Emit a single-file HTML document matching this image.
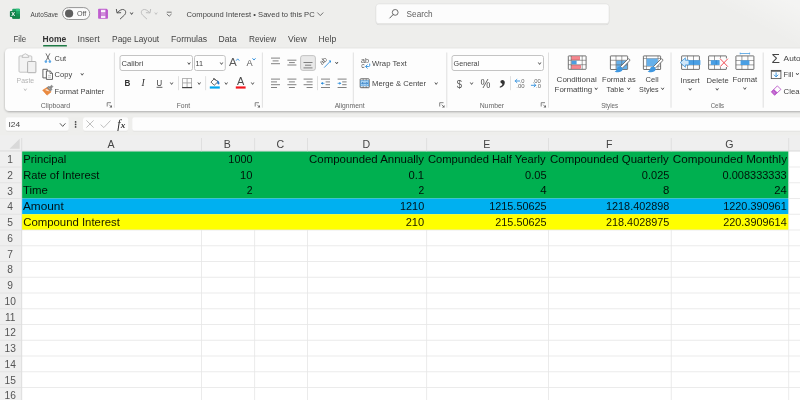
<!DOCTYPE html>
<html lang="en">
<head>
<meta charset="utf-8">
<title>Compound Interest - Excel</title>
<style>
html,body{margin:0;padding:0;background:#eeeeec;overflow:hidden;}
body{position:relative;width:800px;height:400px;overflow:hidden;font-family:"Liberation Sans", sans-serif;}
svg{display:block;position:absolute;left:-10px;top:-10px;font-family:"Liberation Sans", sans-serif;filter:blur(0.4px);}
svg text{white-space:pre;}
</style>
</head>
<body>
<svg width="820" height="420" viewBox="-10 -10 820 420">
<defs><filter id="sh1" x="-5%" y="-20%" width="110%" height="150%"><feDropShadow dx="0" dy="0.9" stdDeviation="1.1" flood-color="#000" flood-opacity="0.30"/></filter><filter id="sh2" x="-5%" y="-30%" width="110%" height="180%"><feDropShadow dx="0" dy="0.5" stdDeviation="0.6" flood-color="#000" flood-opacity="0.22"/></filter><filter id="sh3" x="-5%" y="-30%" width="110%" height="180%"><feDropShadow dx="0" dy="0.4" stdDeviation="0.5" flood-color="#000" flood-opacity="0.12"/></filter><linearGradient id="mica" x1="0" y1="1" x2="1" y2="0"><stop offset="0.45" stop-color="#ffffff" stop-opacity="0"/><stop offset="0.8" stop-color="#ffffff" stop-opacity="0.35"/><stop offset="1" stop-color="#ffffff" stop-opacity="0.4"/></linearGradient></defs>
<g id="chrome-bg">
<rect x="-10.00" y="-10.00" width="820.00" height="420.00" fill="#eeeeec" />
<rect x="700.00" y="-10.00" width="110.00" height="58.00" fill="url(#mica)" />
</g>
<g id="titlebar">
<rect x="12.20" y="8.80" width="7.80" height="10.00" fill="#21a366" rx="1" />
<path d="M16.1 8.8 H19 a1 1 0 0 1 1 1 V11.3 H16.1 Z" fill="#33c481" />
<rect x="16.10" y="11.30" width="3.90" height="2.50" fill="#21a366" />
<rect x="16.10" y="13.80" width="3.90" height="2.50" fill="#129152" />
<path d="M12.2 16.3 H20 V17.8 a1 1 0 0 1 -1 1 H13.2 a1 1 0 0 1 -1 -1 Z" fill="#17834a" />
<rect x="12.20" y="11.30" width="3.90" height="5.00" fill="#17884c" />
<rect x="9.90" y="11.00" width="6.10" height="6.10" fill="#12804a" rx="0.8" />
<text x="11.19" y="16.30" font-size="6.2" fill="#fff" textLength="3.83" lengthAdjust="spacingAndGlyphs" font-weight="700" >X</text>
<text x="30.62" y="16.50" font-size="7.5" fill="#444" textLength="27.52" lengthAdjust="spacingAndGlyphs" >AutoSave</text>
<rect x="62.60" y="7.60" width="27.10" height="11.90" fill="#fbfbfb" stroke="#8a8a8a" stroke-width="0.9" rx="5.95" />
<circle cx="69.1" cy="13.5" r="4.1" fill="#5e5e5e"/>
<text x="76.91" y="16.30" font-size="7.7" fill="#555" textLength="9.44" lengthAdjust="spacingAndGlyphs" >Off</text>
<path d="M98.1 9.5 a0.8 0.8 0 0 1 0.8 -0.8 H106.6 L108 10.1 V18.0 a0.8 0.8 0 0 1 -0.8 0.8 H98.9 a0.8 0.8 0 0 1 -0.8 -0.8 Z" fill="#bf5ecf" />
<rect x="100.40" y="9.40" width="5.60" height="8.80" fill="#cf8bd9" />
<rect x="100.90" y="10.10" width="4.60" height="2.00" fill="#fbf3fc" />
<rect x="100.90" y="16.10" width="4.60" height="1.80" fill="#fbf3fc" />
<line x1="100.50" y1="9.40" x2="100.50" y2="18.20" stroke="#b24cc4" stroke-width="0.6" />
<line x1="105.90" y1="9.40" x2="105.90" y2="18.20" stroke="#b24cc4" stroke-width="0.6" />
<path d="M116.4 9.4 L117.0 12.9 L120.7 12.7" fill="none" stroke="#555" stroke-width="1" stroke-linecap="round" stroke-linejoin="round"/>
<path d="M117.2 12.7 C119.4 10.3 122 8.9 123.9 9.7 C126.1 10.6 126.2 13.2 124.5 15.0 L120.3 18.9" fill="none" stroke="#555" stroke-width="1" stroke-linecap="round"/>
<path d="M130.55 12.80 L131.60 14.40 L132.65 12.80" fill="none" stroke="#444" stroke-width="1.0" stroke-linecap="round" stroke-linejoin="round"/>
<path d="M150.6 9.4 L150.0 12.9 L146.3 12.7" fill="none" stroke="#bdbdbd" stroke-width="1" stroke-linecap="round" stroke-linejoin="round"/>
<path d="M149.8 12.7 C147.6 10.3 145 8.9 143.1 9.7 C140.9 10.6 140.8 13.2 142.5 15.0 L146.7 18.9" fill="none" stroke="#bdbdbd" stroke-width="1" stroke-linecap="round"/>
<path d="M154.95 12.80 L156.00 14.40 L157.05 12.80" fill="none" stroke="#c4c4c4" stroke-width="1.0" stroke-linecap="round" stroke-linejoin="round"/>
<line x1="166.80" y1="12.20" x2="171.60" y2="12.20" stroke="#555" stroke-width="0.8" />
<path d="M167.10 14.20 L169.20 16.20 L171.30 14.20" fill="none" stroke="#555" stroke-width="0.8" stroke-linecap="round" stroke-linejoin="round"/>
<text x="186.60" y="17.00" font-size="8.0" fill="#444" textLength="128.06" lengthAdjust="spacingAndGlyphs" >Compound Interest • Saved to this PC</text>
<path d="M317.60 12.80 L320.30 15.60 L323.00 12.80" fill="none" stroke="#555" stroke-width="0.8" stroke-linecap="round" stroke-linejoin="round"/>
<rect x="376.00" y="4.00" width="233.00" height="19.60" fill="#fcfcfc" stroke="#e2e2e0" stroke-width="0.6" rx="2.8" filter="url(#sh2)"/>
<circle cx="395.2" cy="12.4" r="2.9" fill="none" stroke="#555" stroke-width="0.85"/>
<line x1="393.10" y1="14.60" x2="389.80" y2="18.00" stroke="#555" stroke-width="0.95" stroke-linecap="round"/>
<text x="406.59" y="16.50" font-size="8.2" fill="#606060" textLength="26.07" lengthAdjust="spacingAndGlyphs" >Search</text>
</g>
<g id="tabs">
<text x="13.57" y="41.90" font-size="8.5" fill="#444" textLength="12.60" lengthAdjust="spacingAndGlyphs" >File</text>
<text x="42.58" y="41.90" font-size="8.5" fill="#333" textLength="23.59" lengthAdjust="spacingAndGlyphs" font-weight="700" >Home</text>
<rect x="43.00" y="45.00" width="24.00" height="1.60" fill="#1e7a45" rx="0.7" />
<text x="77.58" y="41.90" font-size="8.5" fill="#444" textLength="22.09" lengthAdjust="spacingAndGlyphs" >Insert</text>
<text x="112.08" y="41.90" font-size="8.5" fill="#444" textLength="47.09" lengthAdjust="spacingAndGlyphs" >Page Layout</text>
<text x="171.07" y="41.90" font-size="8.5" fill="#444" textLength="36.09" lengthAdjust="spacingAndGlyphs" >Formulas</text>
<text x="218.57" y="41.90" font-size="8.5" fill="#444" textLength="18.09" lengthAdjust="spacingAndGlyphs" >Data</text>
<text x="249.07" y="41.90" font-size="8.5" fill="#444" textLength="27.09" lengthAdjust="spacingAndGlyphs" >Review</text>
<text x="288.07" y="41.90" font-size="8.5" fill="#444" textLength="18.59" lengthAdjust="spacingAndGlyphs" >View</text>
<text x="318.57" y="41.90" font-size="8.5" fill="#444" textLength="17.59" lengthAdjust="spacingAndGlyphs" >Help</text>
</g>
<g id="ribbon">
<rect x="5.00" y="48.50" width="825.00" height="62.60" fill="#fdfdfd" rx="4.4" filter="url(#sh1)"/>
<line x1="114.40" y1="52.50" x2="114.40" y2="107.70" stroke="#dcdcdc" stroke-width="0.9" />
<line x1="262.40" y1="52.50" x2="262.40" y2="107.70" stroke="#dcdcdc" stroke-width="0.9" />
<line x1="353.30" y1="52.50" x2="353.30" y2="107.70" stroke="#dcdcdc" stroke-width="0.9" />
<line x1="446.80" y1="52.50" x2="446.80" y2="107.70" stroke="#dcdcdc" stroke-width="0.9" />
<line x1="548.50" y1="52.50" x2="548.50" y2="107.70" stroke="#dcdcdc" stroke-width="0.9" />
<line x1="671.00" y1="52.50" x2="671.00" y2="107.70" stroke="#dcdcdc" stroke-width="0.9" />
<line x1="763.20" y1="52.50" x2="763.20" y2="107.70" stroke="#dcdcdc" stroke-width="0.9" />
<text x="40.64" y="107.60" font-size="7.2" fill="#666" textLength="29.50" lengthAdjust="spacingAndGlyphs" >Clipboard</text>
<text x="176.64" y="107.60" font-size="7.2" fill="#666" textLength="13.50" lengthAdjust="spacingAndGlyphs" >Font</text>
<text x="334.64" y="107.60" font-size="7.2" fill="#666" textLength="30.00" lengthAdjust="spacingAndGlyphs" >Alignment</text>
<text x="479.64" y="107.60" font-size="7.2" fill="#666" textLength="24.50" lengthAdjust="spacingAndGlyphs" >Number</text>
<text x="601.14" y="107.60" font-size="7.2" fill="#666" textLength="17.00" lengthAdjust="spacingAndGlyphs" >Styles</text>
<text x="710.64" y="107.60" font-size="7.2" fill="#666" textLength="13.50" lengthAdjust="spacingAndGlyphs" >Cells</text>
<path d="M111.0 102.7 H107.2 V106.5" fill="none" stroke="#666" stroke-width="0.8" />
<path d="M109.2 104.7 L111.60000000000001 107.10000000000001" fill="none" stroke="#666" stroke-width="0.8" />
<path d="M112.0 104.9 V107.5 H109.4 Z" fill="#666" />
<path d="M259.0 102.7 H255.2 V106.5" fill="none" stroke="#666" stroke-width="0.8" />
<path d="M257.2 104.7 L259.59999999999997 107.10000000000001" fill="none" stroke="#666" stroke-width="0.8" />
<path d="M260.0 104.9 V107.5 H257.4 Z" fill="#666" />
<path d="M443.5 102.7 H439.7 V106.5" fill="none" stroke="#666" stroke-width="0.8" />
<path d="M441.7 104.7 L444.09999999999997 107.10000000000001" fill="none" stroke="#666" stroke-width="0.8" />
<path d="M444.5 104.9 V107.5 H441.9 Z" fill="#666" />
<path d="M545.0 102.7 H541.2 V106.5" fill="none" stroke="#666" stroke-width="0.8" />
<path d="M543.2 104.7 L545.6 107.10000000000001" fill="none" stroke="#666" stroke-width="0.8" />
<path d="M546.0 104.9 V107.5 H543.4000000000001 Z" fill="#666" />
<rect x="19.00" y="55.90" width="12.80" height="16.30" fill="#f3f3f3" stroke="#bebebe" stroke-width="0.9" rx="1" />
<path d="M22.0 57.4 L22.8 54.9 H23.9 a1.5 1.5 0 0 1 2.9 0 H27.9 L28.7 57.4 Z" fill="#f7f7f7" stroke="#bebebe" stroke-width="0.9" stroke-linejoin="round"/>
<rect x="27.60" y="61.50" width="8.30" height="11.20" fill="#f1f1f1" stroke="#a9a9a9" stroke-width="0.9" rx="0.6" />
<text x="16.61" y="82.75" font-size="7.8" fill="#b4b4b4" textLength="17.55" lengthAdjust="spacingAndGlyphs" >Paste</text>
<path d="M24.25 89.00 L25.30 90.60 L26.35 89.00" fill="none" stroke="#c0c0c0" stroke-width="1.0" stroke-linecap="round" stroke-linejoin="round"/>
<line x1="45.90" y1="53.40" x2="49.60" y2="60.60" stroke="#555" stroke-width="0.8" />
<line x1="49.90" y1="53.40" x2="46.20" y2="60.60" stroke="#555" stroke-width="0.8" />
<circle cx="45.9" cy="61.6" r="1.3" fill="#5ba8e8"/>
<circle cx="49.9" cy="61.6" r="1.3" fill="#5ba8e8"/>
<text x="54.61" y="60.60" font-size="7.8" fill="#444" textLength="11.55" lengthAdjust="spacingAndGlyphs" >Cut</text>
<path d="M46.2 77.9 H42.9 V69.3 H47.3 V70.9" fill="none" stroke="#555" stroke-width="0.9" />
<path d="M46.4 71.0 H50.2 L52.5 73.3 V79.4 H46.4 Z" fill="#fdfdfd" stroke="#555" stroke-width="0.9" />
<path d="M50.0 71.1 V73.5 H52.4" fill="none" stroke="#555" stroke-width="0.7" />
<path d="M48 75.4 H51 M48 77.2 H51" fill="none" stroke="#999" stroke-width="0.6" />
<text x="54.61" y="77.25" font-size="7.8" fill="#444" textLength="17.55" lengthAdjust="spacingAndGlyphs" >Copy</text>
<path d="M81.15 73.60 L82.20 75.20 L83.25 73.60" fill="none" stroke="#555" stroke-width="1.0" stroke-linecap="round" stroke-linejoin="round"/>
<path d="M42.6 90.2 L46.9 87.6 L51.1 91.9 L47.0 95.2 Z" fill="#ea8a40" stroke="#e67e30" stroke-width="0.5" stroke-linejoin="round"/>
<path d="M45.0 90.1 L47.0 88.9 L49.6 91.5 Z" fill="#fdf3ea" />
<path d="M47.0 87.6 L49.0 86.2 L49.8 86.9 L51.6 85.2 L52.9 86.5 L51.3 88.3 L52.0 89.2 L50.6 91.0 Z" fill="#8a8a8a" stroke="#666" stroke-width="0.5" stroke-linejoin="round"/>
<path d="M48.8 87.6 L50.4 89.2" fill="none" stroke="#e8e8e8" stroke-width="0.5" />
<text x="54.61" y="93.50" font-size="7.8" fill="#444" textLength="49.55" lengthAdjust="spacingAndGlyphs" >Format Painter</text>
<rect x="120.00" y="55.50" width="72.50" height="15.00" fill="#fefefe" stroke="#bdbdbd" stroke-width="0.9" rx="2" />
<text x="121.61" y="66.00" font-size="7.8" fill="#444" textLength="21.55" lengthAdjust="spacingAndGlyphs" >Calibri</text>
<path d="M187.95 62.80 L189.00 64.40 L190.05 62.80" fill="none" stroke="#555" stroke-width="1.0" stroke-linecap="round" stroke-linejoin="round"/>
<rect x="194.50" y="55.50" width="30.80" height="15.00" fill="#fefefe" stroke="#bdbdbd" stroke-width="0.9" rx="2" />
<text x="195.61" y="66.00" font-size="7.8" fill="#444" textLength="7.55" lengthAdjust="spacingAndGlyphs" >11</text>
<path d="M220.45 62.80 L221.50 64.40 L222.55 62.80" fill="none" stroke="#555" stroke-width="1.0" stroke-linecap="round" stroke-linejoin="round"/>
<text x="229.05" y="66.20" font-size="11.0" fill="#5a5a5a" textLength="7.77" lengthAdjust="spacingAndGlyphs" >A</text>
<path d="M236.40 60.35 L237.70 58.85 L239.00 60.35" fill="none" stroke="#2f8fdc" stroke-width="0.95" stroke-linecap="round" stroke-linejoin="round"/>
<text x="246.44" y="66.20" font-size="9.3" fill="#5a5a5a" textLength="6.15" lengthAdjust="spacingAndGlyphs" >A</text>
<path d="M252.70 58.55 L254.00 60.05 L255.30 58.55" fill="none" stroke="#2f8fdc" stroke-width="0.95" stroke-linecap="round" stroke-linejoin="round"/>
<text x="124.53" y="85.90" font-size="9.4" fill="#333" textLength="5.86" lengthAdjust="spacingAndGlyphs" font-weight="700" >B</text>
<text x="141.41" y="85.90" font-size="9.8" fill="#333" font-style="italic" font-family='"Liberation Serif", serif' >I</text>
<text x="156.56" y="85.70" font-size="8.9" fill="#333" textLength="5.62" lengthAdjust="spacingAndGlyphs" >U</text>
<line x1="156.60" y1="87.30" x2="162.40" y2="87.30" stroke="#333" stroke-width="0.8" />
<path d="M170.55 82.80 L171.60 84.40 L172.65 82.80" fill="none" stroke="#555" stroke-width="1.0" stroke-linecap="round" stroke-linejoin="round"/>
<line x1="178.50" y1="76.20" x2="178.50" y2="90.20" stroke="#dcdcdc" stroke-width="0.9" />
<rect x="182.60" y="78.40" width="9.00" height="9.00" fill="none" stroke="#a4a4a4" stroke-width="0.8" />
<line x1="187.10" y1="78.40" x2="187.10" y2="87.40" stroke="#9a9a9a" stroke-width="0.8" />
<line x1="182.60" y1="82.90" x2="191.60" y2="82.90" stroke="#9a9a9a" stroke-width="0.8" />
<line x1="182.10" y1="87.60" x2="192.10" y2="87.60" stroke="#444" stroke-width="1.2" />
<path d="M198.15 82.80 L199.20 84.40 L200.25 82.80" fill="none" stroke="#555" stroke-width="1.0" stroke-linecap="round" stroke-linejoin="round"/>
<line x1="205.60" y1="76.20" x2="205.60" y2="90.20" stroke="#dcdcdc" stroke-width="0.9" />
<path d="M210.9 82.0 L214.5 78.6 L217.8 81.9 L214.2 85.3 Z" fill="#fdfdfd" stroke="#4a4a4a" stroke-width="0.85" stroke-linejoin="round"/>
<line x1="213.20" y1="78.20" x2="215.60" y2="80.40" stroke="#4a4a4a" stroke-width="0.85" />
<path d="M217.6 80.6 C218.8 81.6 219.3 82.8 219.0 84.2 L217.6 83.6 Z" fill="#1f74c8" stroke="#1f74c8" stroke-width="0.6" />
<rect x="209.80" y="86.40" width="10.00" height="2.20" fill="#00a6ee" />
<path d="M225.15 82.80 L226.20 84.40 L227.25 82.80" fill="none" stroke="#555" stroke-width="1.0" stroke-linecap="round" stroke-linejoin="round"/>
<text x="236.90" y="85.10" font-size="10.0" fill="#4a4a4a" textLength="7.30" lengthAdjust="spacingAndGlyphs" >A</text>
<rect x="235.80" y="86.40" width="9.80" height="2.20" fill="#f2161e" />
<path d="M251.55 82.80 L252.60 84.40 L253.65 82.80" fill="none" stroke="#555" stroke-width="1.0" stroke-linecap="round" stroke-linejoin="round"/>
<line x1="271.00" y1="58.10" x2="280.00" y2="58.10" stroke="#6c6c6c" stroke-width="0.85" />
<line x1="272.60" y1="60.90" x2="278.60" y2="60.90" stroke="#6c6c6c" stroke-width="0.85" />
<line x1="271.00" y1="63.70" x2="280.00" y2="63.70" stroke="#6c6c6c" stroke-width="0.85" />
<line x1="287.40" y1="60.20" x2="296.40" y2="60.20" stroke="#6c6c6c" stroke-width="0.85" />
<line x1="289.00" y1="62.60" x2="294.80" y2="62.60" stroke="#6c6c6c" stroke-width="0.85" />
<line x1="287.40" y1="65.00" x2="296.40" y2="65.00" stroke="#6c6c6c" stroke-width="0.85" />
<rect x="300.60" y="55.60" width="14.80" height="14.80" fill="#e9e9e9" stroke="#bdbdbd" stroke-width="0.9" rx="2.2" />
<line x1="303.50" y1="62.50" x2="312.50" y2="62.50" stroke="#6c6c6c" stroke-width="0.85" />
<line x1="305.00" y1="65.20" x2="311.20" y2="65.20" stroke="#6c6c6c" stroke-width="0.85" />
<line x1="303.50" y1="67.90" x2="312.50" y2="67.90" stroke="#6c6c6c" stroke-width="0.85" />
<g transform="translate(322.3,65.0) rotate(-45)">
<text x="-0.34" y="0.00" font-size="6.8" fill="#555" textLength="7.88" lengthAdjust="spacingAndGlyphs" >ab</text>
</g>
<line x1="324.20" y1="67.60" x2="330.40" y2="61.20" stroke="#2f8fdc" stroke-width="0.9" />
<path d="M328.6 60.6 H331 V63 Z" fill="#2f8fdc" />
<path d="M335.65 62.30 L336.70 63.90 L337.75 62.30" fill="none" stroke="#555" stroke-width="1.0" stroke-linecap="round" stroke-linejoin="round"/>
<line x1="271.00" y1="79.10" x2="280.00" y2="79.10" stroke="#6c6c6c" stroke-width="0.85" />
<line x1="271.00" y1="81.90" x2="277.00" y2="81.90" stroke="#6c6c6c" stroke-width="0.85" />
<line x1="271.00" y1="84.70" x2="280.00" y2="84.70" stroke="#6c6c6c" stroke-width="0.85" />
<line x1="271.00" y1="87.50" x2="277.00" y2="87.50" stroke="#6c6c6c" stroke-width="0.85" />
<line x1="287.40" y1="79.10" x2="296.40" y2="79.10" stroke="#6c6c6c" stroke-width="0.85" />
<line x1="288.90" y1="81.90" x2="294.90" y2="81.90" stroke="#6c6c6c" stroke-width="0.85" />
<line x1="287.40" y1="84.70" x2="296.40" y2="84.70" stroke="#6c6c6c" stroke-width="0.85" />
<line x1="288.90" y1="87.50" x2="294.90" y2="87.50" stroke="#6c6c6c" stroke-width="0.85" />
<line x1="303.60" y1="79.10" x2="312.60" y2="79.10" stroke="#6c6c6c" stroke-width="0.85" />
<line x1="306.60" y1="81.90" x2="312.60" y2="81.90" stroke="#6c6c6c" stroke-width="0.85" />
<line x1="303.60" y1="84.70" x2="312.60" y2="84.70" stroke="#6c6c6c" stroke-width="0.85" />
<line x1="306.60" y1="87.50" x2="312.60" y2="87.50" stroke="#6c6c6c" stroke-width="0.85" />
<line x1="317.50" y1="76.20" x2="317.50" y2="90.20" stroke="#dcdcdc" stroke-width="0.9" />
<line x1="321.00" y1="79.10" x2="330.00" y2="79.10" stroke="#6c6c6c" stroke-width="0.85" />
<line x1="325.60" y1="81.90" x2="330.00" y2="81.90" stroke="#6c6c6c" stroke-width="0.85" />
<line x1="325.60" y1="84.70" x2="330.00" y2="84.70" stroke="#6c6c6c" stroke-width="0.85" />
<line x1="321.00" y1="87.50" x2="330.00" y2="87.50" stroke="#6c6c6c" stroke-width="0.85" />
<path d="M321.0 83.3 H324.4" fill="none" stroke="#2f8fdc" stroke-width="0.8" />
<path d="M323.0 81.9 L320.9 83.3 L323.0 84.7 Z" fill="#2f8fdc" />
<line x1="337.60" y1="79.10" x2="346.60" y2="79.10" stroke="#6c6c6c" stroke-width="0.85" />
<line x1="342.20" y1="81.90" x2="346.60" y2="81.90" stroke="#6c6c6c" stroke-width="0.85" />
<line x1="342.20" y1="84.70" x2="346.60" y2="84.70" stroke="#6c6c6c" stroke-width="0.85" />
<line x1="337.60" y1="87.50" x2="346.60" y2="87.50" stroke="#6c6c6c" stroke-width="0.85" />
<path d="M337.6 83.3 H340.6" fill="none" stroke="#2f8fdc" stroke-width="0.8" />
<path d="M339.3 81.9 L341.4 83.3 L339.3 84.7 Z" fill="#2f8fdc" />
<text x="361.05" y="63.00" font-size="7.0" fill="#555" textLength="7.99" lengthAdjust="spacingAndGlyphs" >ab</text>
<text x="361.25" y="68.00" font-size="7.0" fill="#555" textLength="3.39" lengthAdjust="spacingAndGlyphs" >c</text>
<path d="M369.7 63.6 V65.5 a1 1 0 0 1 -1 1 H365.8" fill="none" stroke="#2f8fdc" stroke-width="0.9" />
<path d="M367.3 64.8 L365.5 66.5 L367.3 68.2" fill="none" stroke="#2f8fdc" stroke-width="0.9" stroke-linejoin="round" stroke-linecap="round"/>
<text x="372.11" y="66.00" font-size="7.8" fill="#444" textLength="34.55" lengthAdjust="spacingAndGlyphs" >Wrap Text</text>
<rect x="360.20" y="78.80" width="9.00" height="8.90" fill="#fdfdfd" stroke="#555" stroke-width="0.9" rx="0.6" />
<rect x="360.70" y="80.70" width="8.00" height="5.20" fill="#a9d2f2" stroke="#3d94dc" stroke-width="0.6" />
<line x1="363.20" y1="78.80" x2="363.20" y2="80.50" stroke="#555" stroke-width="0.6" />
<line x1="366.20" y1="78.80" x2="366.20" y2="80.50" stroke="#555" stroke-width="0.6" />
<line x1="363.20" y1="86.10" x2="363.20" y2="87.70" stroke="#555" stroke-width="0.6" />
<line x1="366.20" y1="86.10" x2="366.20" y2="87.70" stroke="#555" stroke-width="0.6" />
<path d="M361.8 83.3 H367.6 M363.0 82.1 L361.8 83.3 L363.0 84.5 M366.4 82.1 L367.6 83.3 L366.4 84.5" fill="none" stroke="#1b6fbd" stroke-width="0.7" />
<text x="372.11" y="86.25" font-size="7.8" fill="#444" textLength="54.05" lengthAdjust="spacingAndGlyphs" >Merge &amp; Center</text>
<path d="M435.15 82.80 L436.20 84.40 L437.25 82.80" fill="none" stroke="#555" stroke-width="1.0" stroke-linecap="round" stroke-linejoin="round"/>
<rect x="452.00" y="55.50" width="91.50" height="15.00" fill="#fefefe" stroke="#bdbdbd" stroke-width="0.9" rx="2" />
<text x="453.61" y="66.00" font-size="7.8" fill="#444" textLength="25.55" lengthAdjust="spacingAndGlyphs" >General</text>
<path d="M538.55 62.80 L539.60 64.40 L540.65 62.80" fill="none" stroke="#555" stroke-width="1.0" stroke-linecap="round" stroke-linejoin="round"/>
<text x="456.81" y="87.70" font-size="11.8" fill="#555" textLength="5.23" lengthAdjust="spacingAndGlyphs" >$</text>
<path d="M470.55 82.80 L471.60 84.40 L472.65 82.80" fill="none" stroke="#555" stroke-width="1.0" stroke-linecap="round" stroke-linejoin="round"/>
<text x="480.58" y="87.90" font-size="12.4" fill="#555" textLength="9.97" lengthAdjust="spacingAndGlyphs" >%</text>
<text x="499.55" y="83.80" font-size="25" fill="#333" font-weight="700" font-family='"Liberation Serif", serif' >,</text>
<line x1="510.50" y1="76.20" x2="510.50" y2="90.20" stroke="#dcdcdc" stroke-width="0.9" />
<path d="M515.2 81.0 H519.6 M516.9 79.4 L515.2 81.0 L516.9 82.6" fill="none" stroke="#2f8fdc" stroke-width="0.9" stroke-linejoin="round" stroke-linecap="round"/>
<text x="521.29" y="83.20" font-size="6.2" fill="#666" textLength="3.23" lengthAdjust="spacingAndGlyphs" >0</text>
<circle cx="520.7" cy="82.8" r="0.4" fill="#666"/>
<text x="516.29" y="88.00" font-size="6.2" fill="#666" textLength="8.33" lengthAdjust="spacingAndGlyphs" >.00</text>
<text x="532.69" y="83.20" font-size="6.2" fill="#666" textLength="8.23" lengthAdjust="spacingAndGlyphs" >.00</text>
<path d="M531.3 85.3 H535.8 M534.1 83.7 L535.8 85.3 L534.1 86.9" fill="none" stroke="#2f8fdc" stroke-width="0.9" stroke-linejoin="round" stroke-linecap="round"/>
<text x="536.09" y="88.00" font-size="6.2" fill="#666" textLength="4.83" lengthAdjust="spacingAndGlyphs" >.0</text>
<rect x="568.30" y="55.90" width="17.80" height="13.40" fill="#fdfdfd" stroke="#5a5a5a" stroke-width="0.85" rx="0.4" />
<rect x="571.50" y="56.50" width="8.30" height="3.40" fill="#f6868d" stroke="#e8545e" stroke-width="0.4" />
<rect x="571.40" y="60.70" width="5.20" height="3.60" fill="#4a9de2" />
<rect x="571.50" y="65.20" width="9.30" height="3.50" fill="#f6868d" stroke="#e8545e" stroke-width="0.4" />
<line x1="568.30" y1="60.30" x2="586.10" y2="60.30" stroke="#5a5a5a" stroke-width="0.7" opacity="0.8"/>
<line x1="568.30" y1="64.70" x2="586.10" y2="64.70" stroke="#5a5a5a" stroke-width="0.7" opacity="0.8"/>
<line x1="571.10" y1="55.90" x2="571.10" y2="69.30" stroke="#5a5a5a" stroke-width="0.7" opacity="0.8"/>
<line x1="582.20" y1="55.90" x2="582.20" y2="69.30" stroke="#5a5a5a" stroke-width="0.7" opacity="0.8"/>
<text x="556.61" y="81.90" font-size="7.8" fill="#444" textLength="40.05" lengthAdjust="spacingAndGlyphs" >Conditional</text>
<text x="554.61" y="91.50" font-size="7.8" fill="#444" textLength="37.55" lengthAdjust="spacingAndGlyphs" >Formatting</text>
<path d="M595.15 88.10 L596.20 89.70 L597.25 88.10" fill="none" stroke="#555" stroke-width="1.0" stroke-linecap="round" stroke-linejoin="round"/>
<rect x="610.40" y="55.90" width="17.20" height="13.60" fill="#fdfdfd" stroke="#5a5a5a" stroke-width="0.85" rx="0.4" />
<rect x="616.20" y="60.50" width="11.00" height="8.60" fill="#66b0ea" />
<line x1="610.40" y1="60.30" x2="627.60" y2="60.30" stroke="#5a5a5a" stroke-width="0.7" opacity="0.8"/>
<line x1="610.40" y1="64.90" x2="627.60" y2="64.90" stroke="#5a5a5a" stroke-width="0.7" opacity="0.8"/>
<line x1="616.00" y1="55.90" x2="616.00" y2="69.50" stroke="#5a5a5a" stroke-width="0.7" opacity="0.8"/>
<line x1="621.80" y1="55.90" x2="621.80" y2="69.50" stroke="#5a5a5a" stroke-width="0.7" opacity="0.8"/>
<path d="M620.2 66.80000000000001 L627.8000000000001 59.2 a1.1 1.1 0 0 1 1.7 1.7 L622.0 68.5 Z" fill="#fdfdfd" stroke="#5a5a5a" stroke-width="0.8" stroke-linejoin="round"/>
<path d="M614.6 71.4 C616.2 71.0 616.8000000000001 69.60000000000001 617.4 68.0 C618.4 66.2 620.4 66.0 621.8000000000001 67.2 C623.2 68.60000000000001 622.8000000000001 70.60000000000001 621.0 71.60000000000001 C619.0 72.60000000000001 616.6 72.4 614.6 71.4 Z" fill="#3f97e0" />
<text x="602.11" y="81.90" font-size="7.8" fill="#444" textLength="33.55" lengthAdjust="spacingAndGlyphs" >Format as</text>
<text x="606.61" y="91.50" font-size="7.8" fill="#444" textLength="17.55" lengthAdjust="spacingAndGlyphs" >Table</text>
<path d="M627.55 88.10 L628.60 89.70 L629.65 88.10" fill="none" stroke="#555" stroke-width="1.0" stroke-linecap="round" stroke-linejoin="round"/>
<rect x="643.40" y="55.90" width="17.20" height="13.60" fill="#fdfdfd" stroke="#5a5a5a" stroke-width="0.85" rx="0.4" />
<line x1="643.40" y1="58.40" x2="660.60" y2="58.40" stroke="#5a5a5a" stroke-width="0.7" opacity="0.8"/>
<line x1="643.40" y1="66.20" x2="660.60" y2="66.20" stroke="#5a5a5a" stroke-width="0.7" opacity="0.8"/>
<line x1="646.40" y1="55.90" x2="646.40" y2="69.50" stroke="#5a5a5a" stroke-width="0.7" opacity="0.8"/>
<line x1="658.00" y1="55.90" x2="658.00" y2="69.50" stroke="#5a5a5a" stroke-width="0.7" opacity="0.8"/>
<rect x="646.60" y="58.60" width="11.20" height="7.40" fill="#66b0ea" />
<path d="M653.2 66.80000000000001 L660.8000000000001 59.2 a1.1 1.1 0 0 1 1.7 1.7 L655.0 68.5 Z" fill="#fdfdfd" stroke="#5a5a5a" stroke-width="0.8" stroke-linejoin="round"/>
<path d="M647.6 71.4 C649.2 71.0 649.8000000000001 69.60000000000001 650.4 68.0 C651.4 66.2 653.4 66.0 654.8000000000001 67.2 C656.2 68.60000000000001 655.8000000000001 70.60000000000001 654.0 71.60000000000001 C652.0 72.60000000000001 649.6 72.4 647.6 71.4 Z" fill="#3f97e0" />
<text x="645.61" y="81.90" font-size="7.8" fill="#444" textLength="13.05" lengthAdjust="spacingAndGlyphs" >Cell</text>
<text x="639.11" y="91.50" font-size="7.8" fill="#444" textLength="19.55" lengthAdjust="spacingAndGlyphs" >Styles</text>
<path d="M661.55 88.10 L662.60 89.70 L663.65 88.10" fill="none" stroke="#555" stroke-width="1.0" stroke-linecap="round" stroke-linejoin="round"/>
<rect x="681.60" y="55.90" width="17.80" height="13.50" fill="#fdfdfd" stroke="#5a5a5a" stroke-width="0.85" rx="0.4" />
<line x1="687.53" y1="55.90" x2="687.53" y2="69.40" stroke="#5a5a5a" stroke-width="0.7" opacity="0.85"/>
<line x1="681.60" y1="60.40" x2="699.40" y2="60.40" stroke="#5a5a5a" stroke-width="0.7" opacity="0.85"/>
<line x1="693.47" y1="55.90" x2="693.47" y2="69.40" stroke="#5a5a5a" stroke-width="0.7" opacity="0.85"/>
<line x1="681.60" y1="64.90" x2="699.40" y2="64.90" stroke="#5a5a5a" stroke-width="0.7" opacity="0.85"/>
<rect x="684.60" y="60.20" width="15.80" height="4.70" fill="#4a9fe4" />
<path d="M685.4 57.8 L680.2 62.55 L685.4 67.3 V64.9 H689 V60.2 H685.4 Z" fill="#cfe6f8" stroke="#2f8fdc" stroke-width="0.7" stroke-linejoin="round"/>
<line x1="693.50" y1="60.20" x2="693.50" y2="64.90" stroke="#2277c4" stroke-width="0.6" />
<text x="680.61" y="82.50" font-size="7.8" fill="#444" textLength="19.05" lengthAdjust="spacingAndGlyphs" >Insert</text>
<path d="M689.15 88.60 L690.20 90.20 L691.25 88.60" fill="none" stroke="#555" stroke-width="1.0" stroke-linecap="round" stroke-linejoin="round"/>
<rect x="708.60" y="55.90" width="17.80" height="13.50" fill="#fdfdfd" stroke="#5a5a5a" stroke-width="0.85" rx="0.4" />
<line x1="714.53" y1="55.90" x2="714.53" y2="69.40" stroke="#5a5a5a" stroke-width="0.7" opacity="0.85"/>
<line x1="708.60" y1="60.40" x2="726.40" y2="60.40" stroke="#5a5a5a" stroke-width="0.7" opacity="0.85"/>
<line x1="720.47" y1="55.90" x2="720.47" y2="69.40" stroke="#5a5a5a" stroke-width="0.7" opacity="0.85"/>
<line x1="708.60" y1="64.90" x2="726.40" y2="64.90" stroke="#5a5a5a" stroke-width="0.7" opacity="0.85"/>
<rect x="710.80" y="60.20" width="9.80" height="4.70" fill="#4a9fe4" />
<line x1="716.20" y1="60.20" x2="716.20" y2="64.90" stroke="#2277c4" stroke-width="0.6" />
<rect x="719.60" y="58.40" width="9.00" height="8.60" fill="#fdfdfd" />
<path d="M720.4 59 L727.6 66.4 M727.6 59 L720.4 66.4" fill="none" stroke="#f0454d" stroke-width="0.95" stroke-linecap="round"/>
<text x="706.61" y="82.50" font-size="7.8" fill="#444" textLength="22.05" lengthAdjust="spacingAndGlyphs" >Delete</text>
<path d="M716.15 88.60 L717.20 90.20 L718.25 88.60" fill="none" stroke="#555" stroke-width="1.0" stroke-linecap="round" stroke-linejoin="round"/>
<rect x="735.90" y="55.90" width="18.00" height="13.50" fill="#fdfdfd" stroke="#5a5a5a" stroke-width="0.85" rx="0.4" />
<line x1="741.90" y1="55.90" x2="741.90" y2="69.40" stroke="#5a5a5a" stroke-width="0.7" opacity="0.85"/>
<line x1="735.90" y1="60.40" x2="753.90" y2="60.40" stroke="#5a5a5a" stroke-width="0.7" opacity="0.85"/>
<line x1="747.90" y1="55.90" x2="747.90" y2="69.40" stroke="#5a5a5a" stroke-width="0.7" opacity="0.85"/>
<line x1="735.90" y1="64.90" x2="753.90" y2="64.90" stroke="#5a5a5a" stroke-width="0.7" opacity="0.85"/>
<rect x="740.60" y="60.30" width="8.80" height="4.70" fill="#4a9fe4" />
<path d="M740.2 53.5 H749.6 M740.2 52.6 V54.4 M749.6 52.6 V54.4" fill="none" stroke="#2f8fdc" stroke-width="0.7" />
<text x="732.61" y="81.50" font-size="7.8" fill="#444" textLength="24.55" lengthAdjust="spacingAndGlyphs" >Format</text>
<path d="M743.75 87.80 L744.80 89.40 L745.85 87.80" fill="none" stroke="#555" stroke-width="1.0" stroke-linecap="round" stroke-linejoin="round"/>
<text x="771.59" y="62.60" font-size="12.2" fill="#444" textLength="8.45" lengthAdjust="spacingAndGlyphs" >Σ</text>
<text x="783.61" y="60.90" font-size="7.8" fill="#444" textLength="34.05" lengthAdjust="spacingAndGlyphs" >AutoSum</text>
<rect x="771.30" y="70.40" width="9.60" height="8.20" fill="#fdfdfd" stroke="#555" stroke-width="0.85" />
<line x1="771.30" y1="71.00" x2="780.90" y2="71.00" stroke="#555" stroke-width="1.4" />
<path d="M776.1 72.8 V76.6 M774.2 75 L776.1 76.9 L778 75" fill="none" stroke="#2f8fdc" stroke-width="0.9" stroke-linecap="round" stroke-linejoin="round"/>
<text x="783.61" y="76.90" font-size="7.8" fill="#444" textLength="9.55" lengthAdjust="spacingAndGlyphs" >Fill</text>
<path d="M796.35 73.40 L797.40 75.00 L798.45 73.40" fill="none" stroke="#555" stroke-width="1.0" stroke-linecap="round" stroke-linejoin="round"/>
<path d="M777.4 85.9 L780.9 89.4 L774.6 95.3 L771.3 91.8 Z" fill="#fdfdfd" stroke="#bb5acb" stroke-width="0.9" stroke-linejoin="round"/>
<path d="M774.0 89.2 L777.5 92.6 L774.6 95.3 L771.3 91.8 Z" fill="#bb5acb" />
<path d="M773.2 91.6 L774.8 93.2" fill="none" stroke="#e9c6ee" stroke-width="0.6" />
<text x="783.61" y="93.60" font-size="7.8" fill="#444" textLength="18.55" lengthAdjust="spacingAndGlyphs" >Clear</text>
</g>
<g id="formulabar">
<rect x="5.60" y="117.20" width="63.20" height="13.60" fill="#fdfdfd" rx="2.2" filter="url(#sh3)"/>
<text x="8.51" y="127.00" font-size="7.8" fill="#444" textLength="11.65" lengthAdjust="spacingAndGlyphs" >I24</text>
<path d="M60.20 123.60 L62.70 126.40 L65.20 123.60" fill="none" stroke="#555" stroke-width="0.95" stroke-linecap="round" stroke-linejoin="round"/>
<circle cx="75.6" cy="121.9" r="0.85" fill="#444"/>
<circle cx="75.6" cy="124.4" r="0.85" fill="#444"/>
<circle cx="75.6" cy="126.9" r="0.85" fill="#444"/>
<rect x="83.00" y="117.20" width="45.20" height="13.60" fill="#fdfdfd" rx="2.2" filter="url(#sh3)"/>
<path d="M86.4 120.4 L93.6 127.6 M93.6 120.4 L86.4 127.6" fill="none" stroke="#b8b8b8" stroke-width="0.9" />
<path d="M100.6 124.6 L103.8 127.6 L110.4 120.6" fill="none" stroke="#b8b8b8" stroke-width="0.9" />
<text x="117.20" y="127.90" font-size="12.0" fill="#2a2a2a" font-style="italic" font-family='"Liberation Serif", serif' >f</text>
<text x="120.74" y="127.90" font-size="9.2" fill="#333" font-weight="700" font-style="italic" font-family='"Liberation Serif", serif' >x</text>
<rect x="132.20" y="117.20" width="697.80" height="13.60" fill="#fdfdfd" rx="2.2" filter="url(#sh3)"/>
</g>
<g id="sheet">
<rect x="21.90" y="151.25" width="788.10" height="258.75" fill="#ffffff" />
<rect x="-10.00" y="135.50" width="820.00" height="15.75" fill="#efefef" />
<rect x="-10.00" y="151.25" width="31.90" height="258.75" fill="#efefef" />
<rect x="21.90" y="151.25" width="766.80" height="47.25" fill="#00b050" />
<rect x="21.90" y="198.50" width="766.80" height="15.75" fill="#00b0f0" />
<rect x="21.90" y="214.25" width="766.80" height="15.75" fill="#ffff00" />
<line x1="21.90" y1="230.00" x2="810.00" y2="230.00" stroke="#e6e6e6" stroke-width="0.8" />
<line x1="21.90" y1="245.75" x2="810.00" y2="245.75" stroke="#e6e6e6" stroke-width="0.8" />
<line x1="21.90" y1="261.50" x2="810.00" y2="261.50" stroke="#e6e6e6" stroke-width="0.8" />
<line x1="21.90" y1="277.25" x2="810.00" y2="277.25" stroke="#e6e6e6" stroke-width="0.8" />
<line x1="21.90" y1="293.00" x2="810.00" y2="293.00" stroke="#e6e6e6" stroke-width="0.8" />
<line x1="21.90" y1="308.75" x2="810.00" y2="308.75" stroke="#e6e6e6" stroke-width="0.8" />
<line x1="21.90" y1="324.50" x2="810.00" y2="324.50" stroke="#e6e6e6" stroke-width="0.8" />
<line x1="21.90" y1="340.25" x2="810.00" y2="340.25" stroke="#e6e6e6" stroke-width="0.8" />
<line x1="21.90" y1="356.00" x2="810.00" y2="356.00" stroke="#e6e6e6" stroke-width="0.8" />
<line x1="21.90" y1="371.75" x2="810.00" y2="371.75" stroke="#e6e6e6" stroke-width="0.8" />
<line x1="21.90" y1="387.50" x2="810.00" y2="387.50" stroke="#e6e6e6" stroke-width="0.8" />
<line x1="21.90" y1="403.25" x2="810.00" y2="403.25" stroke="#e6e6e6" stroke-width="0.8" />
<line x1="21.90" y1="419.00" x2="810.00" y2="419.00" stroke="#e6e6e6" stroke-width="0.8" />
<line x1="788.70" y1="167.00" x2="810.00" y2="167.00" stroke="#e6e6e6" stroke-width="0.8" />
<line x1="788.70" y1="182.75" x2="810.00" y2="182.75" stroke="#e6e6e6" stroke-width="0.8" />
<line x1="788.70" y1="198.50" x2="810.00" y2="198.50" stroke="#e6e6e6" stroke-width="0.8" />
<line x1="788.70" y1="214.25" x2="810.00" y2="214.25" stroke="#e6e6e6" stroke-width="0.8" />
<line x1="201.50" y1="230.00" x2="201.50" y2="410.00" stroke="#e6e6e6" stroke-width="0.8" />
<line x1="201.50" y1="138.00" x2="201.50" y2="151.25" stroke="#dadada" stroke-width="0.8" />
<line x1="254.60" y1="230.00" x2="254.60" y2="410.00" stroke="#e6e6e6" stroke-width="0.8" />
<line x1="254.60" y1="138.00" x2="254.60" y2="151.25" stroke="#dadada" stroke-width="0.8" />
<line x1="307.50" y1="230.00" x2="307.50" y2="410.00" stroke="#e6e6e6" stroke-width="0.8" />
<line x1="307.50" y1="138.00" x2="307.50" y2="151.25" stroke="#dadada" stroke-width="0.8" />
<line x1="426.60" y1="230.00" x2="426.60" y2="410.00" stroke="#e6e6e6" stroke-width="0.8" />
<line x1="426.60" y1="138.00" x2="426.60" y2="151.25" stroke="#dadada" stroke-width="0.8" />
<line x1="548.50" y1="230.00" x2="548.50" y2="410.00" stroke="#e6e6e6" stroke-width="0.8" />
<line x1="548.50" y1="138.00" x2="548.50" y2="151.25" stroke="#dadada" stroke-width="0.8" />
<line x1="671.25" y1="230.00" x2="671.25" y2="410.00" stroke="#e6e6e6" stroke-width="0.8" />
<line x1="671.25" y1="138.00" x2="671.25" y2="151.25" stroke="#dadada" stroke-width="0.8" />
<line x1="788.70" y1="151.25" x2="788.70" y2="410.00" stroke="#e6e6e6" stroke-width="0.8" />
<line x1="788.70" y1="138.00" x2="788.70" y2="151.25" stroke="#dadada" stroke-width="0.8" />
<line x1="21.70" y1="138.00" x2="21.70" y2="410.00" stroke="#dbdbdb" stroke-width="0.9" />
<line x1="-10.00" y1="150.95" x2="810.00" y2="150.95" stroke="#d8d8d8" stroke-width="0.8" />
<line x1="-10.00" y1="167.00" x2="21.40" y2="167.00" stroke="#e0e0e0" stroke-width="0.8" />
<line x1="-10.00" y1="182.75" x2="21.40" y2="182.75" stroke="#e0e0e0" stroke-width="0.8" />
<line x1="-10.00" y1="198.50" x2="21.40" y2="198.50" stroke="#e0e0e0" stroke-width="0.8" />
<line x1="-10.00" y1="214.25" x2="21.40" y2="214.25" stroke="#e0e0e0" stroke-width="0.8" />
<line x1="-10.00" y1="230.00" x2="21.40" y2="230.00" stroke="#e0e0e0" stroke-width="0.8" />
<line x1="-10.00" y1="245.75" x2="21.40" y2="245.75" stroke="#e0e0e0" stroke-width="0.8" />
<line x1="-10.00" y1="261.50" x2="21.40" y2="261.50" stroke="#e0e0e0" stroke-width="0.8" />
<line x1="-10.00" y1="277.25" x2="21.40" y2="277.25" stroke="#e0e0e0" stroke-width="0.8" />
<line x1="-10.00" y1="293.00" x2="21.40" y2="293.00" stroke="#e0e0e0" stroke-width="0.8" />
<line x1="-10.00" y1="308.75" x2="21.40" y2="308.75" stroke="#e0e0e0" stroke-width="0.8" />
<line x1="-10.00" y1="324.50" x2="21.40" y2="324.50" stroke="#e0e0e0" stroke-width="0.8" />
<line x1="-10.00" y1="340.25" x2="21.40" y2="340.25" stroke="#e0e0e0" stroke-width="0.8" />
<line x1="-10.00" y1="356.00" x2="21.40" y2="356.00" stroke="#e0e0e0" stroke-width="0.8" />
<line x1="-10.00" y1="371.75" x2="21.40" y2="371.75" stroke="#e0e0e0" stroke-width="0.8" />
<line x1="-10.00" y1="387.50" x2="21.40" y2="387.50" stroke="#e0e0e0" stroke-width="0.8" />
<line x1="-10.00" y1="403.25" x2="21.40" y2="403.25" stroke="#e0e0e0" stroke-width="0.8" />
<line x1="-10.00" y1="419.00" x2="21.40" y2="419.00" stroke="#e0e0e0" stroke-width="0.8" />
<path d="M19.7 138.8 V148.7 H9.5 Z" fill="#d9d9d9" />
<text x="111.00" y="147.5" font-size="10.6" fill="#444" text-anchor="middle">A</text>
<text x="227.35" y="147.5" font-size="10.6" fill="#444" text-anchor="middle">B</text>
<text x="280.35" y="147.5" font-size="10.6" fill="#444" text-anchor="middle">C</text>
<text x="366.35" y="147.5" font-size="10.6" fill="#444" text-anchor="middle">D</text>
<text x="486.85" y="147.5" font-size="10.6" fill="#444" text-anchor="middle">E</text>
<text x="609.17" y="147.5" font-size="10.6" fill="#444" text-anchor="middle">F</text>
<text x="729.27" y="147.5" font-size="10.6" fill="#444" text-anchor="middle">G</text>
<text x="10.2" y="163.00" font-size="10.2" fill="#555" text-anchor="middle">1</text>
<text x="10.2" y="178.75" font-size="10.2" fill="#555" text-anchor="middle">2</text>
<text x="10.2" y="194.50" font-size="10.2" fill="#555" text-anchor="middle">3</text>
<text x="10.2" y="210.25" font-size="10.2" fill="#555" text-anchor="middle">4</text>
<text x="10.2" y="226.00" font-size="10.2" fill="#555" text-anchor="middle">5</text>
<text x="10.2" y="241.75" font-size="10.2" fill="#555" text-anchor="middle">6</text>
<text x="10.2" y="257.50" font-size="10.2" fill="#555" text-anchor="middle">7</text>
<text x="10.2" y="273.25" font-size="10.2" fill="#555" text-anchor="middle">8</text>
<text x="10.2" y="289.00" font-size="10.2" fill="#555" text-anchor="middle">9</text>
<text x="10.2" y="304.75" font-size="10.2" fill="#555" text-anchor="middle">10</text>
<text x="10.2" y="320.50" font-size="10.2" fill="#555" text-anchor="middle">11</text>
<text x="10.2" y="336.25" font-size="10.2" fill="#555" text-anchor="middle">12</text>
<text x="10.2" y="352.00" font-size="10.2" fill="#555" text-anchor="middle">13</text>
<text x="10.2" y="367.75" font-size="10.2" fill="#555" text-anchor="middle">14</text>
<text x="10.2" y="383.50" font-size="10.2" fill="#555" text-anchor="middle">15</text>
<text x="10.2" y="399.25" font-size="10.2" fill="#555" text-anchor="middle">16</text>
<g fill-opacity="0.9">
<text x="23.23" y="162.75" font-size="10.3" fill="#000" textLength="43.17" lengthAdjust="spacingAndGlyphs" >Principal</text>
<text x="23.23" y="178.50" font-size="10.3" fill="#000" textLength="76.17" lengthAdjust="spacingAndGlyphs" >Rate of Interest</text>
<text x="22.98" y="194.25" font-size="10.3" fill="#000" textLength="24.92" lengthAdjust="spacingAndGlyphs" >Time</text>
<text x="22.98" y="210.00" font-size="10.3" fill="#000" textLength="40.72" lengthAdjust="spacingAndGlyphs" >Amount</text>
<text x="23.18" y="225.75" font-size="10.3" fill="#000" textLength="96.72" lengthAdjust="spacingAndGlyphs" >Compound Interest</text>
<text x="228.39" y="162.75" font-size="10.3" fill="#000" textLength="24.12" lengthAdjust="spacingAndGlyphs" >1000</text>
<text x="240.09" y="178.50" font-size="10.3" fill="#000" textLength="12.42" lengthAdjust="spacingAndGlyphs" >10</text>
<text x="246.69" y="194.25" font-size="10.3" fill="#000" textLength="5.82" lengthAdjust="spacingAndGlyphs" >2</text>
<text x="309.09" y="162.75" font-size="10.3" fill="#000" textLength="115.02" lengthAdjust="spacingAndGlyphs" >Compounded Annually</text>
<text x="408.49" y="178.50" font-size="10.3" fill="#000" textLength="15.62" lengthAdjust="spacingAndGlyphs" >0.1</text>
<text x="418.49" y="194.25" font-size="10.3" fill="#000" textLength="5.72" lengthAdjust="spacingAndGlyphs" >2</text>
<text x="399.99" y="210.00" font-size="10.3" fill="#000" textLength="24.22" lengthAdjust="spacingAndGlyphs" >1210</text>
<text x="405.69" y="225.75" font-size="10.3" fill="#000" textLength="18.52" lengthAdjust="spacingAndGlyphs" >210</text>
<text x="427.99" y="162.75" font-size="10.3" fill="#000" textLength="117.52" lengthAdjust="spacingAndGlyphs" >Compunded Half Yearly</text>
<text x="525.09" y="178.50" font-size="10.3" fill="#000" textLength="21.52" lengthAdjust="spacingAndGlyphs" >0.05</text>
<text x="540.19" y="194.25" font-size="10.3" fill="#000" textLength="6.42" lengthAdjust="spacingAndGlyphs" >4</text>
<text x="489.19" y="210.00" font-size="10.3" fill="#000" textLength="57.42" lengthAdjust="spacingAndGlyphs" >1215.50625</text>
<text x="495.29" y="225.75" font-size="10.3" fill="#000" textLength="51.32" lengthAdjust="spacingAndGlyphs" >215.50625</text>
<text x="550.09" y="162.75" font-size="10.3" fill="#000" textLength="118.62" lengthAdjust="spacingAndGlyphs" >Compounded Quarterly</text>
<text x="641.88" y="178.50" font-size="10.3" fill="#000" textLength="27.52" lengthAdjust="spacingAndGlyphs" >0.025</text>
<text x="663.09" y="194.25" font-size="10.3" fill="#000" textLength="6.32" lengthAdjust="spacingAndGlyphs" >8</text>
<text x="605.99" y="210.00" font-size="10.3" fill="#000" textLength="63.42" lengthAdjust="spacingAndGlyphs" >1218.402898</text>
<text x="605.99" y="225.75" font-size="10.3" fill="#000" textLength="63.42" lengthAdjust="spacingAndGlyphs" >218.4028975</text>
<text x="672.88" y="162.75" font-size="10.3" fill="#000" textLength="114.12" lengthAdjust="spacingAndGlyphs" >Compounded Monthly</text>
<text x="722.59" y="178.50" font-size="10.3" fill="#000" textLength="64.12" lengthAdjust="spacingAndGlyphs" >0.008333333</text>
<text x="774.19" y="194.25" font-size="10.3" fill="#000" textLength="12.52" lengthAdjust="spacingAndGlyphs" >24</text>
<text x="723.19" y="210.00" font-size="10.3" fill="#000" textLength="63.52" lengthAdjust="spacingAndGlyphs" >1220.390961</text>
<text x="723.19" y="225.75" font-size="10.3" fill="#000" textLength="63.52" lengthAdjust="spacingAndGlyphs" >220.3909614</text>
</g>
</g>
</svg>
</body>
</html>
